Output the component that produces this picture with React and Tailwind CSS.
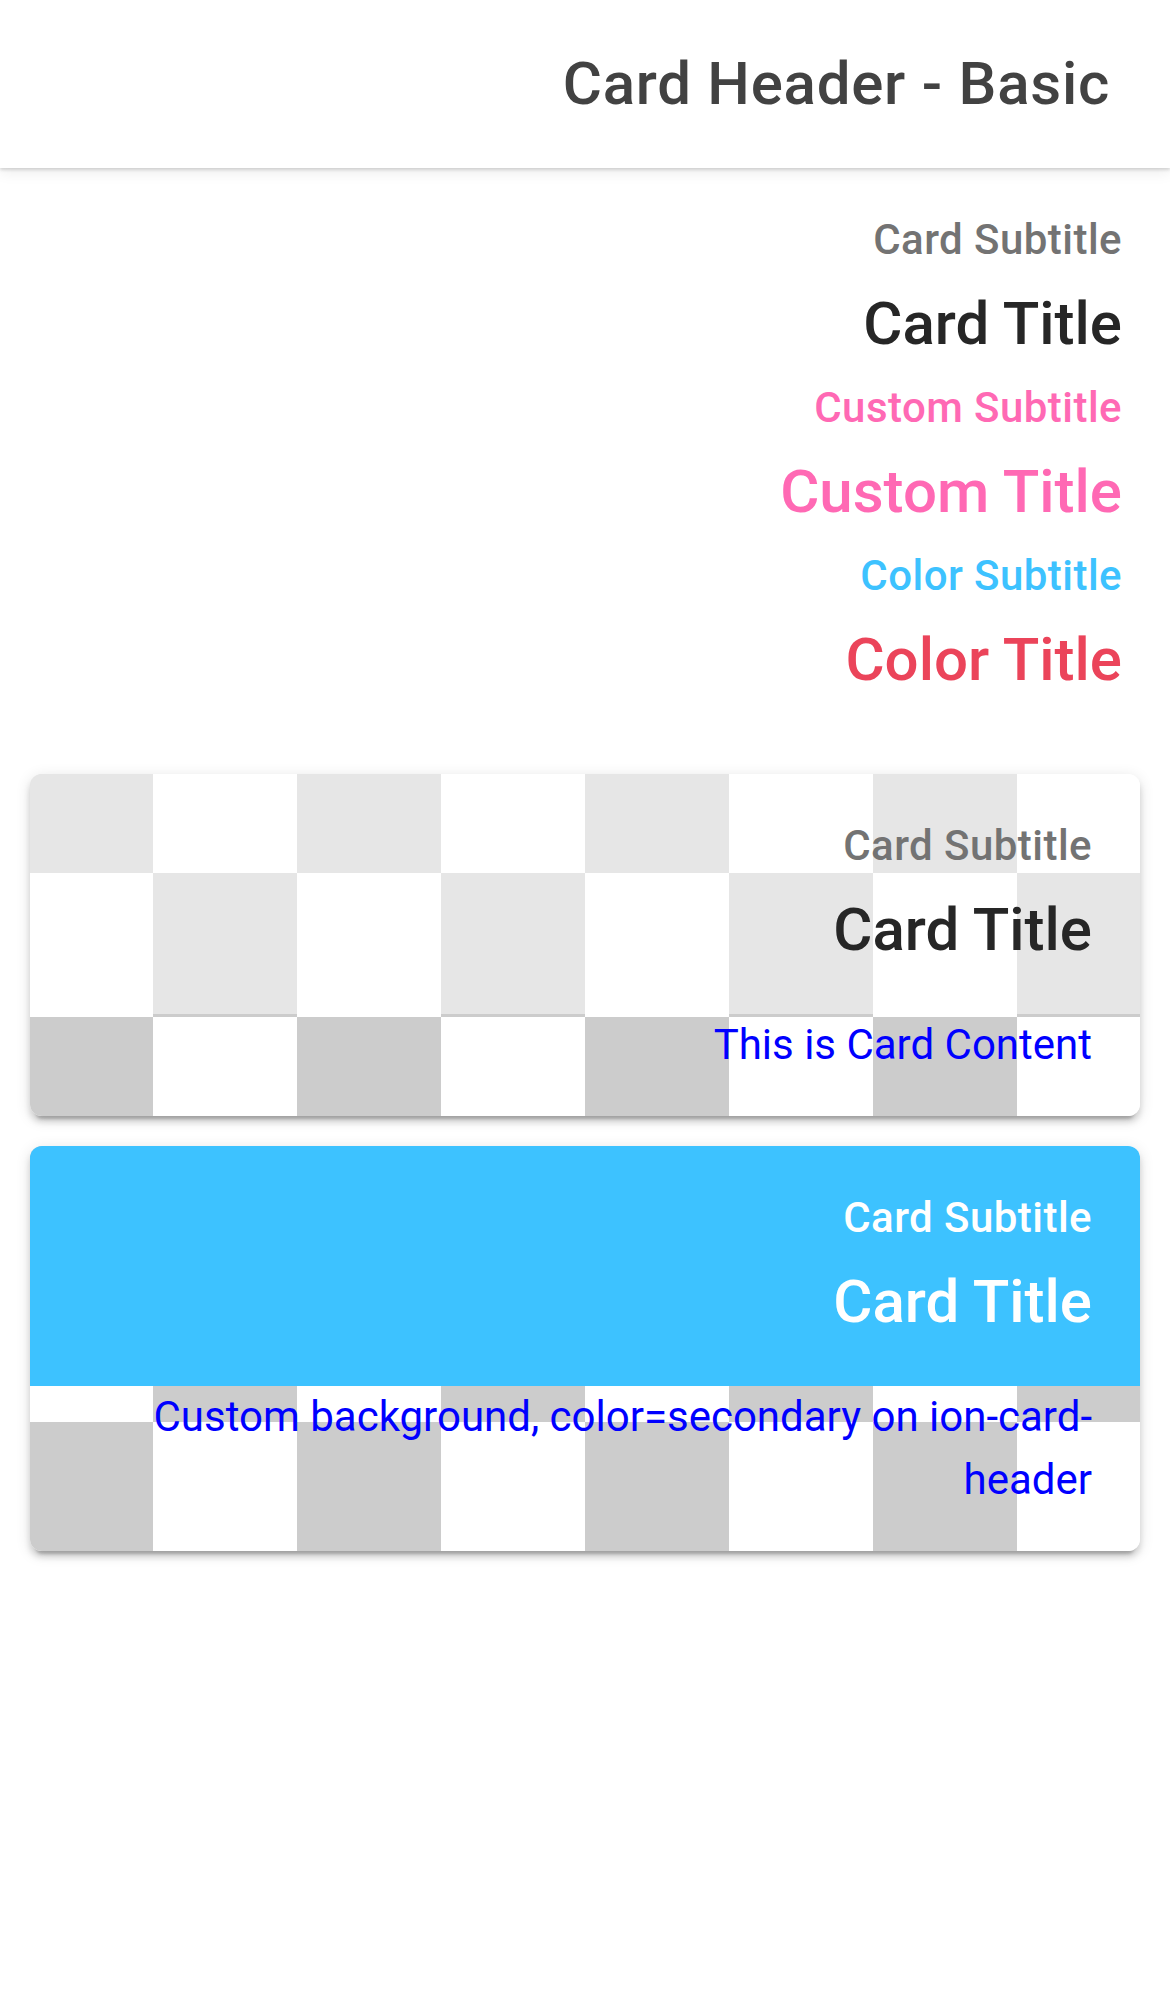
import React from "react";

// Card header demo page (md look, right aligned)
const font = { fontFamily: "Roboto, 'Liberation Sans', sans-serif" };

const Subtitle = ({ className = "text-[#737373]", first = false, children }) => (
  <div
    className={`text-[42px] font-medium leading-[48px] tracking-[0.45px] ${first ? "" : "mt-6"} ${className}`}
  >
    {children}
  </div>
);

const Title = ({ className = "text-[#262626]", children }) => (
  <div className={`mt-6 text-[60px] font-medium leading-[1.2] ${className}`}>{children}</div>
);

const cardClass =
  "mx-[30px] overflow-hidden rounded-[12px] bg-[image:conic-gradient(#fff_25%,#ccc_0_50%,#fff_0_75%,#ccc_0)] bg-[length:288px_288px] shadow-[0_9px_3px_-6px_rgba(0,0,0,0.2),0_6px_6px_0_rgba(0,0,0,0.14),0_3px_15px_0_rgba(0,0,0,0.12)]";

const App = () => {
  return (
    <div className="min-h-[1992px] bg-white text-right" style={font}>
      {/* Toolbar */}
      <div className="relative z-10 flex h-[168px] items-center justify-end bg-white px-[60px] shadow-[0_2px_3px_rgba(0,0,0,0.14),0_4px_14px_rgba(0,0,0,0.08)]">
        <span className="text-[60px] font-medium tracking-[0.0125em] text-[#424242]">
          Card Header - Basic
        </span>
      </div>

      {/* Plain card header */}
      <div className="flex flex-col p-12">
        <Subtitle first>Card Subtitle</Subtitle>
        <Title>Card Title</Title>
        <Subtitle className="text-[#ff69b4]">Custom Subtitle</Subtitle>
        <Title className="text-[#ff69b4]">Custom Title</Title>
        <Subtitle className="text-[#3dc2ff]">Color Subtitle</Subtitle>
        <Title className="text-[#eb445a]">Color Title</Title>
      </div>

      {/* Card with translucent header */}
      <div className={`${cardClass} mt-[30px] bg-[position:123px_99px]`}>
        <div className="flex flex-col bg-white/50 p-12">
          <Subtitle first>Card Subtitle</Subtitle>
          <Title>Card Title</Title>
        </div>
        <div className="-mt-px px-12 pb-[40px] text-[42px] leading-[1.5] text-[#0000ff]">
          This is Card Content
        </div>
      </div>

      {/* Card with coloured header */}
      <div className={`${cardClass} mt-[30px] bg-[position:123px_132px]`}>
        <div className="flex flex-col bg-[#3dc2ff] p-12">
          <Subtitle first className="text-white">Card Subtitle</Subtitle>
          <Title className="text-white">Card Title</Title>
        </div>
        <div className="-mt-px px-12 pb-[40px] text-[42px] leading-[1.5] text-[#0000ff]">
          Custom background, color=secondary on ion-card-header
        </div>
      </div>
    </div>
  );
};

export default App;
